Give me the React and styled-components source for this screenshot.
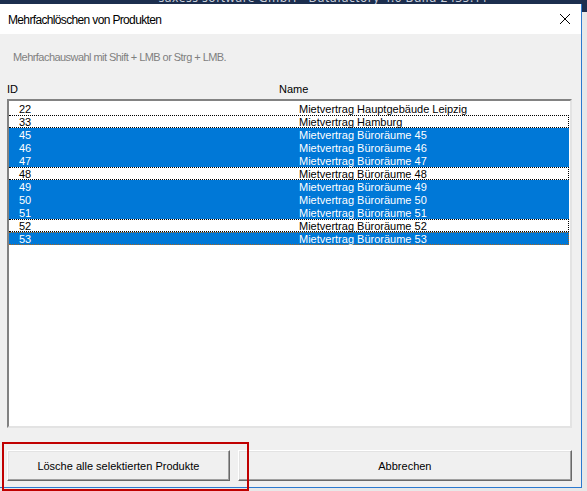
import React from 'react';
import styled, {createGlobalStyle} from 'styled-components';

const GlobalStyle = createGlobalStyle`
  html, body {
    margin: 0;
    padding: 0;
    background: #e6e6e6;
  }
  * { box-sizing: border-box; }
`

const products = [
  {id: 22, name: 'Mietvertrag Hauptgebäude Leipzig', selected: false},
  {id: 33, name: 'Mietvertrag Hamburg', selected: false, focus: true},
  {id: 45, name: 'Mietvertrag Büroräume 45', selected: true},
  {id: 46, name: 'Mietvertrag Büroräume 46', selected: true},
  {id: 47, name: 'Mietvertrag Büroräume 47', selected: true},
  {id: 48, name: 'Mietvertrag Büroräume 48', selected: false, focus: true},
  {id: 49, name: 'Mietvertrag Büroräume 49', selected: true},
  {id: 50, name: 'Mietvertrag Büroräume 50', selected: true},
  {id: 51, name: 'Mietvertrag Büroräume 51', selected: true},
  {id: 52, name: 'Mietvertrag Büroräume 52', selected: false, focus: true},
  {id: 53, name: 'Mietvertrag Büroräume 53', selected: true, focus: true},
]

function App() {
  return (
    <>
      <GlobalStyle />
      <Desktop>
        <ParentTitle>
          <ParentTitleText>saxess software GmbH - Datafactory 4.0 Build 2435.11</ParentTitleText>
        </ParentTitle>

        <Dialog>
          <TitleBar>
            <Title>Mehrfachlöschen von Produkten</Title>
            <CloseBtn aria-label="Schließen">
              <svg width="12" height="12" viewBox="0 0 12 12">
                <path d="M1 1 L11 11 M11 1 L1 11" stroke="#000" strokeWidth="1" fill="none" />
              </svg>
            </CloseBtn>
          </TitleBar>

          <Body>
            <Hint>Mehrfachauswahl mit Shift + LMB or Strg + LMB.</Hint>

            <Headers>
              <span>ID</span>
              <span>Name</span>
            </Headers>

            <ListBox>
              {products.map(p => (
                <Row key={p.id} $selected={p.selected} $focus={p.focus} $orange={p.id === 53}>
                  <span>{p.id}</span>
                  <span>{p.name}</span>
                </Row>
              ))}
            </ListBox>

            <Buttons>
              <Button $width="224px">Lösche alle selektierten Produkte</Button>
              <Button $width="336px">Abbrechen</Button>
            </Buttons>
          </Body>
        </Dialog>

        <Highlight />
      </Desktop>
    </>
  )
}
export default App;

let Desktop = styled.div`
  position: relative;
  width: 587px;
  height: 491px;
  overflow: hidden;
  background: #e8e8e8;
  font-family: "Liberation Sans", Arial, sans-serif;
`

let ParentTitle = styled.div`
  height: 12px;
  background: #1c2e4e;
  overflow: hidden;
  display: flex;
  justify-content: center;
`

let ParentTitleText = styled.div`
  margin-top: -10px;
  margin-left: 60px;
  font-family: "Noto Sans", "Open Sans", sans-serif;
  font-size: 12px;
  line-height: 16px;
  color: #c9cfdb;
  letter-spacing: 0.5px;
`

let Dialog = styled.div`
  position: absolute;
  left: 0;
  top: 4px;
  width: 582px;
  height: 484px;
  background: #f0f0f0;
  border-right: 1px solid #2b79cf;
  border-bottom: 1px solid #2b79cf;
  display: flex;
  flex-direction: column;
`

let TitleBar = styled.div`
  height: 30px;
  background: #fff;
  display: flex;
  align-items: center;
  justify-content: space-between;
  padding-left: 8px;
`

let Title = styled.div`
  font-family: "Liberation Sans", Arial, sans-serif;
  font-size: 12px;
  letter-spacing: -0.65px;
  color: #000;
  margin-top: 2px;
`

let CloseBtn = styled.div`
  width: 46px;
  height: 30px;
  display: flex;
  align-items: center;
  justify-content: center;
  margin-right: -7px;
`

let Body = styled.div`
  flex: 1;
  display: flex;
  flex-direction: column;
  padding: 0 9px 0 7px;
`

let Hint = styled.div`
  margin-top: 16px;
  padding-left: 6px;
  font-size: 11px;
  letter-spacing: -0.55px;
  line-height: 14px;
  color: #7f7f7f;
`

let Headers = styled.div`
  margin-top: 18px;
  display: grid;
  grid-template-columns: 272px 1fr;
  font-size: 11px;
  line-height: 14px;
  color: #000;
`

let ListBox = styled.div`
  margin-top: 3px;
  height: 329px;
  background: #fff;
  border-top: 2px solid #828282;
  border-left: 2px solid #828282;
  border-right: 2px solid #e3e3e3;
  border-bottom: 2px solid #e3e3e3;
  padding-top: 1px;
`

let Row = styled.div`
  height: 13px;
  display: grid;
  grid-template-columns: 280px 1fr;
  padding-left: 10px;
  font-size: 11px;
  line-height: 13px;
  background: ${p => p.$selected ? '#0078d7' : '#fff'};
  color: ${p => p.$selected ? '#fff' : '#000'};
  border: 1px dotted ${p => p.$focus ? (p.$orange ? '#a8651f' : '#000') : 'transparent'};
  border-left: none;
  margin-right: 1px;
`

let Buttons = styled.div`
  margin-top: 22px;
  display: flex;
  gap: 8px;
`

let Button = styled.button`
  width: ${p => p.$width};
  height: 31px;
  background: #f0f0f0;
  border-top: 1px solid #fff;
  border-left: 1px solid #fff;
  border-right: 1px solid #696969;
  border-bottom: 1px solid #696969;
  box-shadow: inset -1px -1px 0 #a0a0a0, inset 1px 1px 0 #e3e3e3;
  font-family: "Liberation Sans", Arial, sans-serif;
  font-size: 11px;
  color: #000;
  padding: 0;
  cursor: pointer;
`

let Highlight = styled.div`
  position: absolute;
  left: 2px;
  top: 442px;
  width: 247px;
  height: 49px;
  border: 2px solid #c00000;
  pointer-events: none;
`
